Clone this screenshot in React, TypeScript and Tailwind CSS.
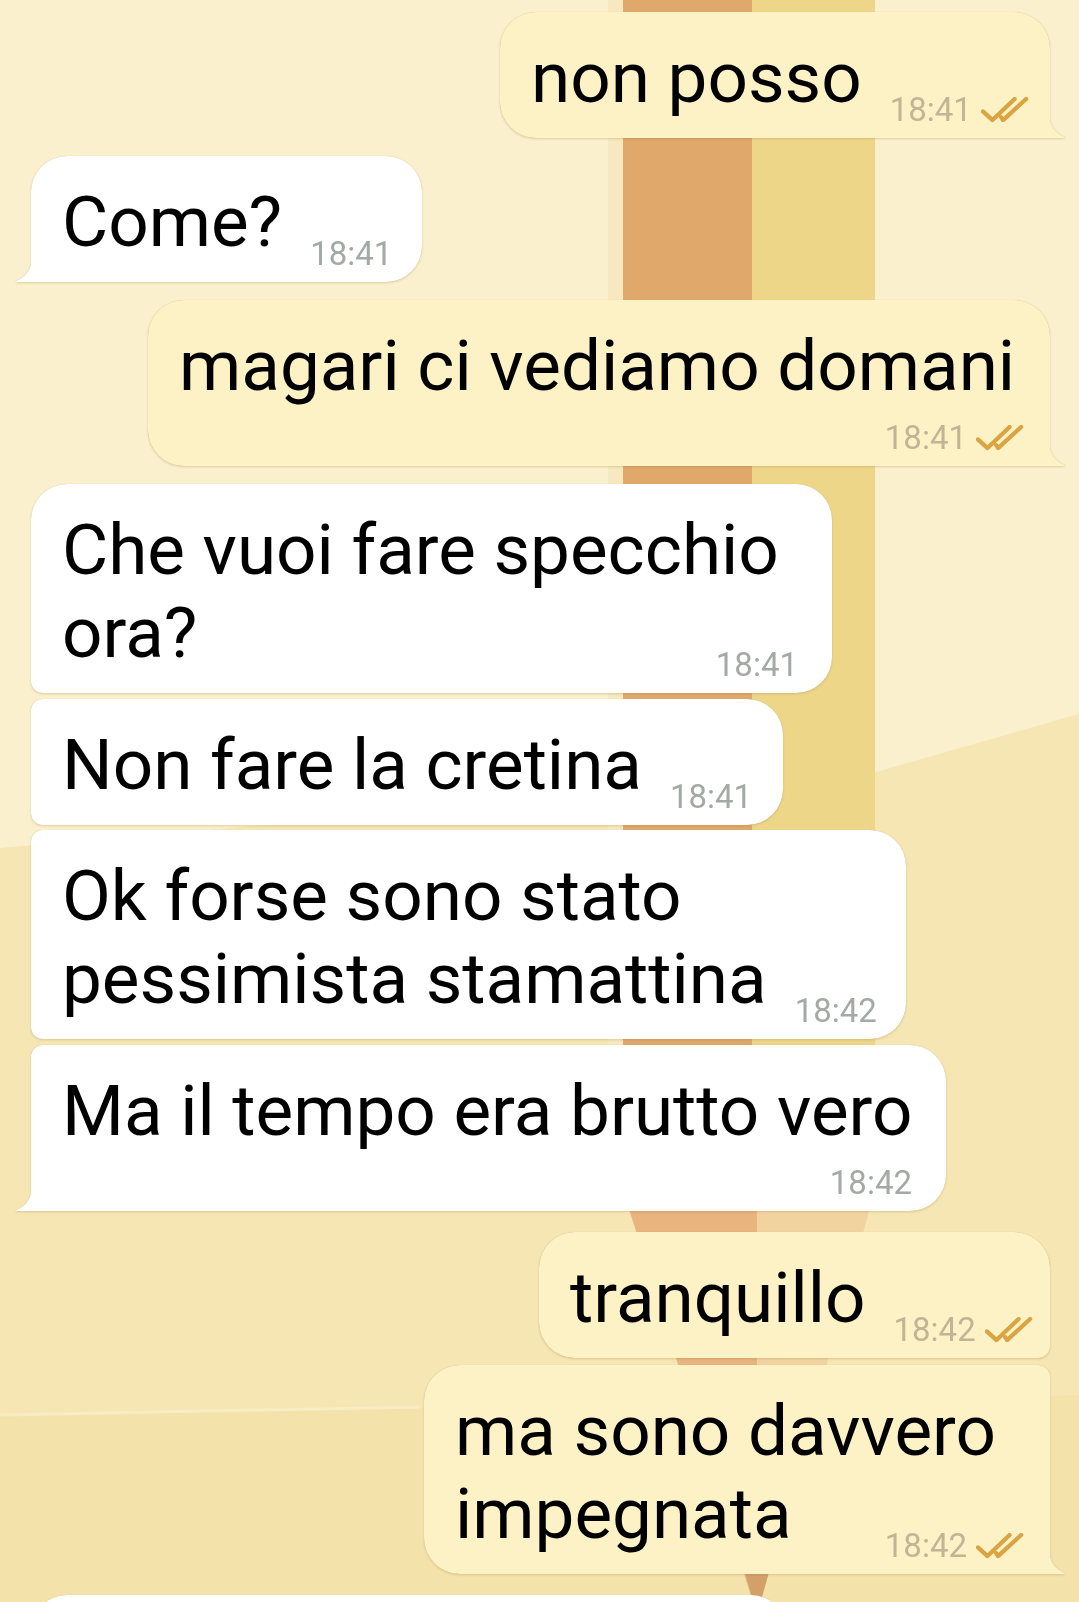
import type { ReactNode } from 'react';

type Msg = {
  id: number;
  out: boolean;
  lines: string[];
  time?: string;
  timeRow?: boolean;
  tail?: boolean;
  width: string;
  corners: string;
  gap: string;
  height?: string;
};

const MESSAGES: Msg[] = [
  { id: 1, out: true, lines: ['non posso'], time: '18:41', tail: true, width: 'w-[550px]', corners: 'rounded-tl-[36px] rounded-tr-[36px] rounded-br-none rounded-bl-[36px]', gap: 'mt-[12px]' },
  { id: 2, out: false, lines: ['Come?'], time: '18:41', tail: true, width: 'w-[391px]', corners: 'rounded-tl-[36px] rounded-tr-[36px] rounded-br-[36px] rounded-bl-none', gap: 'mt-[18px]' },
  { id: 3, out: true, lines: ['magari ci vediamo domani'], time: '18:41', timeRow: true, tail: true, width: 'w-[902px]', corners: 'rounded-tl-[36px] rounded-tr-[36px] rounded-br-none rounded-bl-[36px]', gap: 'mt-[18px]' },
  { id: 4, out: false, lines: ['Che vuoi fare specchio', 'ora?'], time: '18:41', width: 'w-[801px]', corners: 'rounded-tl-[36px] rounded-tr-[36px] rounded-br-[36px] rounded-bl-[12px]', gap: 'mt-[18px]' },
  { id: 5, out: false, lines: ['Non fare la cretina'], time: '18:41', width: 'w-[752px]', corners: 'rounded-tl-[12px] rounded-tr-[36px] rounded-br-[36px] rounded-bl-[12px]', gap: 'mt-[6px]' },
  { id: 6, out: false, lines: ['Ok forse sono stato', 'pessimista stamattina'], time: '18:42', width: 'w-[875px]', corners: 'rounded-tl-[12px] rounded-tr-[36px] rounded-br-[36px] rounded-bl-[12px]', gap: 'mt-[5px]' },
  { id: 7, out: false, lines: ['Ma il tempo era brutto vero'], time: '18:42', timeRow: true, tail: true, width: 'w-[915px]', corners: 'rounded-tl-[12px] rounded-tr-[36px] rounded-br-[36px] rounded-bl-none', gap: 'mt-[6px]' },
  { id: 8, out: true, lines: ['tranquillo'], time: '18:42', width: 'w-[511px]', corners: 'rounded-tl-[36px] rounded-tr-[36px] rounded-br-[12px] rounded-bl-[36px]', gap: 'mt-[21px]' },
  { id: 9, out: true, lines: ['ma sono davvero', 'impegnata'], time: '18:42', tail: true, width: 'w-[626px]', corners: 'rounded-tl-[36px] rounded-tr-[12px] rounded-br-none rounded-bl-[36px]', gap: 'mt-[7px]' },
  { id: 10, out: false, lines: [], width: 'w-[756px]', corners: 'rounded-tl-[36px] rounded-tr-[36px] rounded-br-[36px] rounded-bl-[12px]', gap: 'mt-[21px]', height: 'h-[126px]' },
];

function Checks() {
  return (
    <svg width="48" height="26" viewBox="0 0 50 27" fill="none" className="shrink-0">
      <path d="M2 15 L12 24 L35 2" stroke="#d9a441" strokeWidth="4.4" strokeLinecap="round" strokeLinejoin="round" />
      <path d="M21 21 L23 24 L47 2" stroke="#d9a441" strokeWidth="4.4" strokeLinecap="round" strokeLinejoin="round" />
    </svg>
  );
}

function Time({ value, out }: { value: string; out: boolean }) {
  return (
    <span
      className={
        out
          ? 'flex items-center gap-[9px] text-[33px] leading-[33px] -mb-[7px] text-[#c0b594] whitespace-nowrap shrink-0'
          : 'flex items-center text-[33px] leading-[33px] -mb-[7px] text-[#a3aaa5] whitespace-nowrap shrink-0'
      }
    >
      {value}
      {out && <Checks />}
    </span>
  );
}

function Tail({ out }: { out: boolean }) {
  return (
    <svg
      width="17"
      height="26"
      viewBox="0 0 17 26"
      className={out ? 'absolute bottom-0 right-[-16px] -scale-x-100' : 'absolute bottom-0 left-[-16px]'}
    >
      <path d="M17 0 C17 13 11 21 2 24.5 Q0 25.4 1.5 26 L17 26 Z" fill={out ? '#fcf2c6' : '#ffffff'} />
    </svg>
  );
}

function Bubble({ m }: { m: Msg }) {
  const last = m.lines[m.lines.length - 1];
  let body: ReactNode = null;
  if (m.lines.length > 0 && m.time) {
    body = (
      <>
        {m.lines.slice(0, -1).map((l) => (
          <div key={l} className="whitespace-nowrap">{l}</div>
        ))}
        {m.timeRow ? (
          <>
            <div className="whitespace-nowrap">{last}</div>
            <div className="flex justify-end mt-[14px]">
              <Time value={m.time} out={m.out} />
            </div>
          </>
        ) : (
          <div className="flex items-end justify-between gap-[28px]">
            <span className="whitespace-nowrap">{last}</span>
            <Time value={m.time} out={m.out} />
          </div>
        )}
      </>
    );
  }

  return (
    <div className={`flex ${m.out ? 'justify-end pr-[29px]' : 'justify-start pl-[31px]'} ${m.gap}`}>
      <div className="relative [filter:drop-shadow(0_0_0.6px_rgba(170,140,70,0.55))_drop-shadow(0_1.5px_1px_rgba(150,120,50,0.28))]">
        <div
          className={`${m.width} ${m.corners} ${m.height ?? ''} ${
            m.out ? 'bg-[#fcf2c6] pl-[31px] pr-[26px]' : 'bg-white pl-[31px] pr-[34px]'
          } pt-[24px] pb-[19px] text-[71px] leading-[83px] text-black`}
        >
          {body}
        </div>
        {m.tail && <Tail out={m.out} />}
      </div>
    </div>
  );
}

function Wallpaper() {
  return (
    <svg className="absolute inset-0" width="1079" height="1602" viewBox="0 0 1079 1602">
      <rect width="1079" height="1602" fill="#faf0cd" />
      <polygon points="0,848 876,772 1079,714 1079,1602 0,1602" fill="#f5e6b3" />
      <polygon points="0,1416 420,1408 1079,1395 1079,1602 0,1602" fill="#f3e3aa" />
      <line x1="0" y1="1415" x2="420" y2="1407" stroke="#f8ecc4" strokeWidth="3" />
      <rect x="608" y="0" width="15" height="1190" fill="#f7e8bf" />
      <rect x="623" y="0" width="129" height="1190" fill="#e0a86b" />
      <rect x="752" y="0" width="123" height="1190" fill="#eed689" />
      <polygon points="623,1190 757,1190 757,1615" fill="#e9b47e" />
      <polygon points="757,1190 875,1190 757,1615" fill="#f1d3a0" />
      <polygon points="743,1565 771,1565 757,1615" fill="#d3a06c" />
    </svg>
  );
}

export default function App() {
  return (
    <div className="relative w-[1079px] h-[1602px] overflow-hidden bg-[#faf0cd] font-[Roboto,sans-serif]">
      <Wallpaper />
      <div className="relative flex flex-col">
        {MESSAGES.map((m) => (
          <Bubble key={m.id} m={m} />
        ))}
      </div>
    </div>
  );
}
